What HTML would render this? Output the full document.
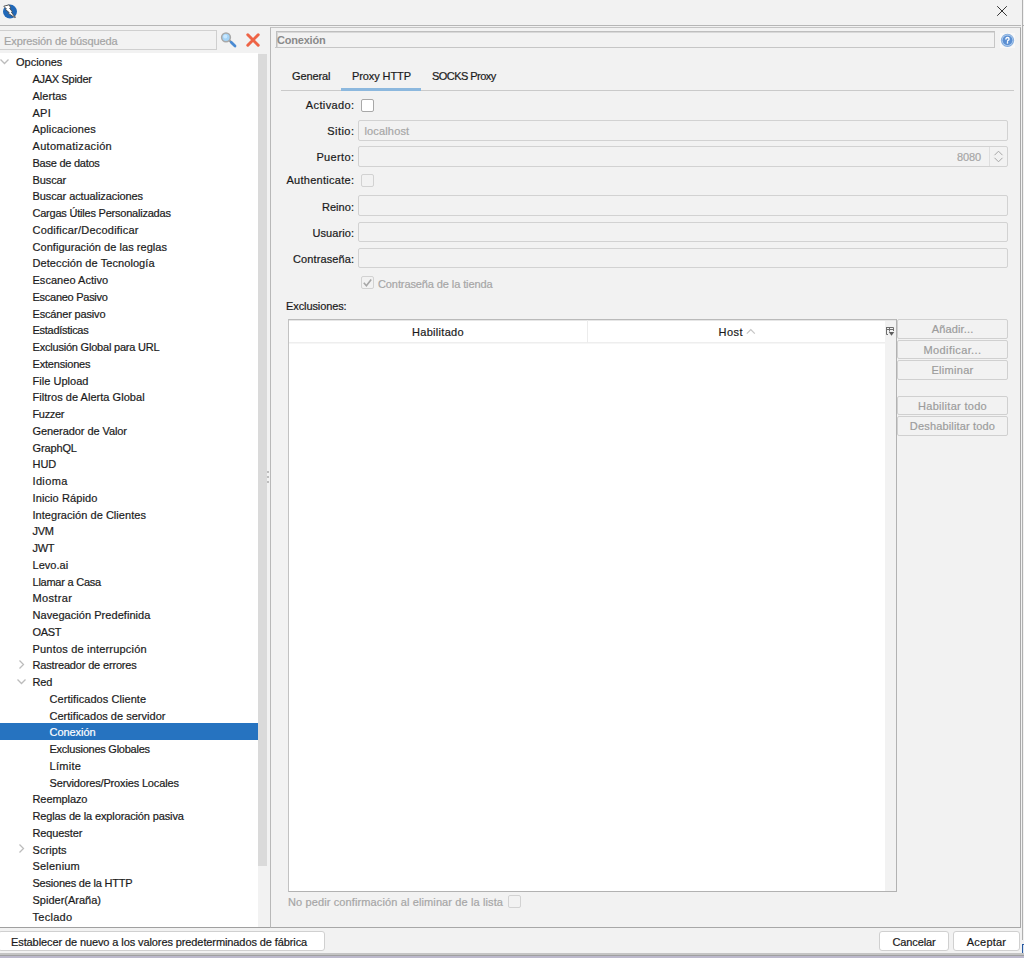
<!DOCTYPE html>
<html><head><meta charset="utf-8">
<style>
*{box-sizing:border-box;margin:0;padding:0}
html,body{width:1024px;height:958px;overflow:hidden;background:#f2f2f2;font-family:"Liberation Sans",sans-serif;font-size:11px;color:#1a1a1a;letter-spacing:-0.1px;-webkit-text-stroke:0.2px currentColor}

.a{position:absolute}
.t{position:absolute;white-space:pre;line-height:13px}
.hl{position:absolute;height:1px;background:#a0a0a0}
.vl{position:absolute;width:1px;background:#a0a0a0}
.fld{position:absolute;border:1px solid #d2d2d2;background:#f2f2f2;border-radius:2px}
.cb{position:absolute;width:13px;height:13px;border:1px solid #a8a8a8;background:#fff;border-radius:2px}
.cbd{border-color:#d2d2d2;background:#f2f2f2}
.btn{position:absolute;border:1px solid #d0d0d0;background:#f2f2f2;border-radius:2px;color:#9c9c9c;text-align:center;line-height:17px;white-space:pre;padding-top:1px}
.wb{background:#fff;color:#1a1a1a;border-color:#d0d0d0;border-radius:3px;padding-top:2px}
.lbl{position:absolute;white-space:pre;text-align:right;width:100px;line-height:13px}
</style></head><body>
<!-- title bar -->
<svg class="a" style="left:2px;top:3px" width="17" height="17" viewBox="0 0 17 17">
<circle cx="8" cy="8.6" r="7" fill="#2068b8"/>
<path d="M1.8 3.2 L7.2 1.8 L8.6 4.6 L7.6 5.2 L10.2 8.6 L9.4 9.2 L12.6 13.6 L13.6 14.2 L12.8 14.6 L6.4 10.4 L7.2 9.6 L3.6 6.6 L4.4 6 Z" fill="#fff" stroke="#4a4a4a" stroke-width="0.9" stroke-linejoin="round"/>
</svg>
<svg class="a" style="left:996px;top:5px" width="12" height="12" viewBox="0 0 12 12"><path d="M1.2 1.2 L10.8 10.8 M10.8 1.2 L1.2 10.8" stroke="#2a2a2a" stroke-width="0.95"/></svg>
<div class="hl" style="left:0;top:25px;width:1021px;background:#b6b6b6"></div>
<div class="vl" style="left:1022px;top:0;height:940px;background:#b0b0b0"></div>
<div class="a" style="left:1022px;top:944px;width:2px;height:9px;border-left:1px solid #2a5aa0;border-top:1px solid #2a5aa0;background:#d8e4f4"></div>

<!-- left panel -->
<div class="fld" style="left:-1px;top:30px;width:218px;height:20px;border-color:#cfcfcf;border-radius:0"></div>
<div class="t" style="left:4px;top:35px;color:#a4a4a4">Expresión de búsqueda</div>
<svg class="a" style="left:220px;top:31px" width="18" height="18" viewBox="0 0 18 18">
<path d="M9 9 L10.6 10.6" stroke="#8a8a8a" stroke-width="2"/>
<path d="M11.2 11.2 L15 14.9" stroke="#4a8ad2" stroke-width="2.8" stroke-linecap="round"/>
<circle cx="6" cy="6.3" r="4.4" fill="#a4d4f8" stroke="#a8a8a8" stroke-width="1.5"/>
<circle cx="5.3" cy="5.6" r="2" fill="#c8e8ff"/>
</svg>
<svg class="a" style="left:245px;top:32px" width="16" height="16" viewBox="0 0 16 16">
<path d="M2.8 2.8 L13.2 13.2 M13.2 2.8 L2.8 13.2" stroke="#ee6446" stroke-width="3" stroke-linecap="round"/>
</svg>
<div class="a" style="left:0;top:53px;width:258px;height:874px;background:#fff"></div>
<div class="a" style="left:258px;top:53px;width:9px;height:874px;background:#f2f2f2"></div>
<div class="a" style="left:258px;top:54px;width:9px;height:812px;background:#dadada"></div>
<div class="a" style="left:0;top:723px;width:258px;height:17px;background:#2673c0"></div>
<div class="t" style="left:16px;top:56.40px;color:#1b1b1b;letter-spacing:-0.014px">Opciones</div>
<svg class="a" style="left:0px;top:59px" width="10" height="6" viewBox="0 0 10 6"><path d="M0.5 0.5 L4.5 4.5 L8.5 0.5" fill="none" stroke="#bcbcbc" stroke-width="1.25"/></svg>
<div class="t" style="left:32.5px;top:73.15px;color:#1b1b1b;letter-spacing:-0.3px">AJAX Spider</div>
<div class="t" style="left:32.5px;top:89.90px;color:#1b1b1b;letter-spacing:0.017px">Alertas</div>
<div class="t" style="left:32.5px;top:106.65px;color:#1b1b1b;letter-spacing:0.25px">API</div>
<div class="t" style="left:32.5px;top:123.40px;color:#1b1b1b;letter-spacing:0.145px">Aplicaciones</div>
<div class="t" style="left:32.5px;top:140.15px;color:#1b1b1b;letter-spacing:0.308px">Automatización</div>
<div class="t" style="left:32.5px;top:156.90px;color:#1b1b1b;letter-spacing:-0.25px">Base de datos</div>
<div class="t" style="left:32.5px;top:173.65px;color:#1b1b1b;letter-spacing:-0.1px">Buscar</div>
<div class="t" style="left:32.5px;top:190.40px;color:#1b1b1b;letter-spacing:-0.09px">Buscar actualizaciones</div>
<div class="t" style="left:32.5px;top:207.15px;color:#1b1b1b;letter-spacing:-0.219px">Cargas Útiles Personalizadas</div>
<div class="t" style="left:32.5px;top:223.90px;color:#1b1b1b;letter-spacing:0.225px">Codificar/Decodificar</div>
<div class="t" style="left:32.5px;top:240.65px;color:#1b1b1b;letter-spacing:0.046px">Configuración de las reglas</div>
<div class="t" style="left:32.5px;top:257.40px;color:#1b1b1b;letter-spacing:0.082px">Detección de Tecnología</div>
<div class="t" style="left:32.5px;top:274.15px;color:#1b1b1b;letter-spacing:0.038px">Escaneo Activo</div>
<div class="t" style="left:32.5px;top:290.90px;color:#1b1b1b;letter-spacing:-0.269px">Escaneo Pasivo</div>
<div class="t" style="left:32.5px;top:307.65px;color:#1b1b1b;letter-spacing:-0.169px">Escáner pasivo</div>
<div class="t" style="left:32.5px;top:324.40px;color:#1b1b1b;letter-spacing:-0.282px">Estadísticas</div>
<div class="t" style="left:32.5px;top:341.15px;color:#1b1b1b;letter-spacing:-0.204px">Exclusión Global para URL</div>
<div class="t" style="left:32.5px;top:357.90px;color:#1b1b1b;letter-spacing:-0.19px">Extensiones</div>
<div class="t" style="left:32.5px;top:374.65px;color:#1b1b1b;letter-spacing:0.03px">File Upload</div>
<div class="t" style="left:32.5px;top:391.40px;color:#1b1b1b;letter-spacing:0.035px">Filtros de Alerta Global</div>
<div class="t" style="left:32.5px;top:408.15px;color:#1b1b1b;letter-spacing:-0.35px">Fuzzer</div>
<div class="t" style="left:32.5px;top:424.90px;color:#1b1b1b;letter-spacing:-0.076px">Generador de Valor</div>
<div class="t" style="left:32.5px;top:441.65px;color:#1b1b1b;letter-spacing:-0.133px">GraphQL</div>
<div class="t" style="left:32.5px;top:458.40px;color:#1b1b1b;letter-spacing:-0.05px">HUD</div>
<div class="t" style="left:32.5px;top:475.15px;color:#1b1b1b;letter-spacing:0.35px">Idioma</div>
<div class="t" style="left:32.5px;top:491.90px;color:#1b1b1b;letter-spacing:0.108px">Inicio Rápido</div>
<div class="t" style="left:32.5px;top:508.65px;color:#1b1b1b;letter-spacing:0.041px">Integración de Clientes</div>
<div class="t" style="left:32.5px;top:525.40px;color:#1b1b1b;letter-spacing:-0.25px">JVM</div>
<div class="t" style="left:32.5px;top:542.15px;color:#1b1b1b;letter-spacing:-0.35px">JWT</div>
<div class="t" style="left:32.5px;top:558.90px;color:#1b1b1b;letter-spacing:0.033px">Levo.ai</div>
<div class="t" style="left:32.5px;top:575.65px;color:#1b1b1b;letter-spacing:-0.242px">Llamar a Casa</div>
<div class="t" style="left:32.5px;top:592.40px;color:#1b1b1b;letter-spacing:0.35px">Mostrar</div>
<div class="t" style="left:32.5px;top:609.15px;color:#1b1b1b;letter-spacing:0.052px">Navegación Predefinida</div>
<div class="t" style="left:32.5px;top:625.90px;color:#1b1b1b;letter-spacing:-0.35px">OAST</div>
<div class="t" style="left:32.5px;top:642.65px;color:#1b1b1b;letter-spacing:0.19px">Puntos de interrupción</div>
<div class="t" style="left:32.5px;top:659.40px;color:#1b1b1b;letter-spacing:-0.165px">Rastreador de errores</div>
<svg class="a" style="left:18.5px;top:660px" width="6" height="10" viewBox="0 0 6 10"><path d="M0.5 0.5 L4.5 4.5 L0.5 8.5" fill="none" stroke="#bcbcbc" stroke-width="1.25"/></svg>
<div class="t" style="left:32.5px;top:676.15px;color:#1b1b1b;letter-spacing:-0.15px">Red</div>
<svg class="a" style="left:16.5px;top:679px" width="10" height="6" viewBox="0 0 10 6"><path d="M0.5 0.5 L4.5 4.5 L8.5 0.5" fill="none" stroke="#bcbcbc" stroke-width="1.25"/></svg>
<div class="t" style="left:49.5px;top:692.90px;color:#1b1b1b;letter-spacing:0.063px">Certificados Cliente</div>
<div class="t" style="left:49.5px;top:709.65px;color:#1b1b1b;letter-spacing:0.017px">Certificados de servidor</div>
<div class="t" style="left:49.5px;top:726.40px;color:#ffffff;letter-spacing:-0.057px">Conexión</div>
<div class="t" style="left:49.5px;top:743.15px;color:#1b1b1b;letter-spacing:-0.242px">Exclusiones Globales</div>
<div class="t" style="left:49.5px;top:759.90px;color:#1b1b1b;letter-spacing:0.28px">Límite</div>
<div class="t" style="left:49.5px;top:776.65px;color:#1b1b1b;letter-spacing:-0.156px">Servidores/Proxies Locales</div>
<div class="t" style="left:32.5px;top:793.40px;color:#1b1b1b;letter-spacing:-0.088px">Reemplazo</div>
<div class="t" style="left:32.5px;top:810.15px;color:#1b1b1b;letter-spacing:-0.13px">Reglas de la exploración pasiva</div>
<div class="t" style="left:32.5px;top:826.90px;color:#1b1b1b;letter-spacing:-0.112px">Requester</div>
<div class="t" style="left:32.5px;top:843.65px;color:#1b1b1b;letter-spacing:0.067px">Scripts</div>
<svg class="a" style="left:18.5px;top:844px" width="6" height="10" viewBox="0 0 6 10"><path d="M0.5 0.5 L4.5 4.5 L0.5 8.5" fill="none" stroke="#bcbcbc" stroke-width="1.25"/></svg>
<div class="t" style="left:32.5px;top:860.40px;color:#1b1b1b;letter-spacing:0.2px">Selenium</div>
<div class="t" style="left:32.5px;top:877.15px;color:#1b1b1b;letter-spacing:-0.217px">Sesiones de la HTTP</div>
<div class="t" style="left:32.5px;top:893.90px;color:#1b1b1b;letter-spacing:0.0px">Spider(Araña)</div>
<div class="t" style="left:32.5px;top:910.65px;color:#1b1b1b;letter-spacing:0.267px">Teclado</div>
<div class="a" style="left:267px;top:471px;width:2px;height:2px;background:#acacac;border-radius:1px"></div>
<div class="a" style="left:267px;top:476px;width:2px;height:2px;background:#acacac;border-radius:1px"></div>
<div class="a" style="left:267px;top:481px;width:2px;height:2px;background:#acacac;border-radius:1px"></div>
<div class="hl" style="left:0;top:927px;width:271px;background:#a0a0a0"></div>

<!-- right panel -->
<div class="a" style="left:270px;top:27px;width:751px;height:901px;border:1px solid #b8b8b8;border-top-color:#c4c4c4;border-bottom-color:#a8a8a8;border-right-color:#a8a8a8;background:#f2f2f2"></div>
<div class="hl" style="left:1022px;top:25px;width:2px;background:#b0b0b0"></div>
<div class="a" style="left:276px;top:31px;width:719px;height:17px;border-top:1px solid #bebebe;border-left:1px solid #c0c0c0;border-bottom:1px solid #c6c6c6;border-right:1px solid #c6c6c6;background:#f2f2f2;box-shadow:inset 1px 1px 0 #d8d8d8"></div>
<div class="hl" style="left:275px;top:47px;width:720px;background:#c6c6c6"></div>
<div class="t" style="left:277px;top:34px;color:#8a8a8a;font-weight:bold;letter-spacing:-0.2px;-webkit-text-stroke:0">Conexión</div>
<svg class="a" style="left:1000px;top:33px" width="15" height="15" viewBox="0 0 15 15">
<rect width="15" height="15" fill="#f8f8f8"/>
<circle cx="7.5" cy="7.3" r="6.6" fill="#7fa9dc"/>
<circle cx="7.5" cy="7.3" r="5.7" fill="#b4d0f0"/>
<circle cx="7.5" cy="7.3" r="4.9" fill="#5b8fd2"/>
<path d="M5.9 6 Q5.9 4.5 7.5 4.5 Q9.1 4.5 9.1 5.9 Q9.1 6.8 8.1 7.3 Q7.5 7.6 7.5 8.3" fill="none" stroke="#fff" stroke-width="1.3" stroke-linecap="round"/>
<circle cx="7.5" cy="9.9" r="0.8" fill="#fff"/>
</svg>

<!-- tabs -->
<div class="hl" style="left:281px;top:90px;width:733px;background:#cacaca"></div>
<div class="a" style="left:341px;top:88px;width:80px;height:3px;background:#8cb8de"></div>
<div class="t" style="left:292px;top:70px">General</div>
<div class="t" style="left:352px;top:70px">Proxy HTTP</div>
<div class="t" style="left:432px;top:70px;letter-spacing:-0.55px">SOCKS Proxy</div>

<!-- form -->
<div class="lbl" style="left:254.36px;top:99px;letter-spacing:0.36px">Activado:</div>
<div class="cb" style="left:361px;top:99px"></div>
<div class="lbl" style="left:254.44px;top:125px;letter-spacing:0.44px">Sitio:</div>
<div class="fld" style="left:358px;top:120px;width:650px;height:21px"></div>
<div class="t" style="left:364.5px;top:125px;color:#a6a6a6;letter-spacing:0.15px">localhost</div>
<div class="lbl" style="left:254.35px;top:151px;letter-spacing:0.35px">Puerto:</div>
<div class="fld" style="left:358px;top:146px;width:650px;height:21px"></div>
<div class="vl" style="left:989px;top:147px;height:19px;background:#dedede"></div>
<div class="t" style="left:957px;top:151px;color:#a6a6a6">8080</div>
<svg class="a" style="left:993px;top:150px" width="12" height="13" viewBox="0 0 12 13"><path d="M1.5 5.2 L5.5 1.2 L9.5 5.2 M1.5 7.8 L5.5 11.8 L9.5 7.8" fill="none" stroke="#a6a6a6" stroke-width="1"/></svg>
<div class="lbl" style="left:254.28px;top:174px;letter-spacing:0.28px">Authenticate:</div>
<div class="cb cbd" style="left:361px;top:174px"></div>
<div class="lbl" style="left:254.06px;top:201px;letter-spacing:0.06px">Reino:</div>
<div class="fld" style="left:358px;top:195px;width:650px;height:21px"></div>
<div class="lbl" style="left:254.09px;top:227px;letter-spacing:0.09px">Usuario:</div>
<div class="fld" style="left:358px;top:222px;width:650px;height:20px"></div>
<div class="lbl" style="left:254.10px;top:253px;letter-spacing:0.1px">Contraseña:</div>
<div class="fld" style="left:358px;top:248px;width:650px;height:20px"></div>
<div class="cb cbd" style="left:361px;top:276px"></div>
<svg class="a" style="left:361px;top:276px" width="13" height="13" viewBox="0 0 13 13"><path d="M2.8 6.8 L5.4 9.8 L10.2 3.4" fill="none" stroke="#a6a6a6" stroke-width="1.6"/></svg>
<div class="t" style="left:378px;top:278px;color:#a6a6a6">Contraseña de la tienda</div>
<div class="t" style="left:286px;top:300px">Exclusiones:</div>

<!-- table -->
<div class="a" style="left:288px;top:319px;width:609px;height:573px;border:1px solid #b2b2b2;border-top-color:#bababa;border-left-color:#c2c2c2;background:#fff"></div>
<div class="a" style="left:885px;top:320px;width:11px;height:571px;background:#f2f2f2"></div>
<div class="hl" style="left:289px;top:320px;width:607px;background:#e6e6e6"></div><div class="hl" style="left:289px;top:342px;width:596px;background:#eeeeee"></div><div class="hl" style="left:289px;top:343px;width:596px;background:#f6f6f6"></div>
<div class="vl" style="left:587px;top:320px;height:23px;background:#ececec"></div>
<div class="t" style="left:412px;top:326px;letter-spacing:0.3px">Habilitado</div>
<div class="t" style="left:718.5px;top:326px;letter-spacing:0.5px">Host</div>
<svg class="a" style="left:745px;top:328px" width="11" height="7" viewBox="0 0 11 7"><path d="M1.8 5.6 L5.8 1.6 L9.8 5.6" fill="none" stroke="#c4c4c4" stroke-width="1.2"/></svg>
<svg class="a" style="left:885px;top:326px" width="11" height="11" viewBox="0 0 11 11">
<path d="M1.5 1.5 H8.5 V5 M1.5 1 V8.5 H3 M4.5 1.5 V5.5 M2 3.5 H8.5" fill="none" stroke="#6e6e6e" stroke-width="1"/>
<path d="M3.8 6 H9.2 L6.5 9.8 Z" fill="#5e5e5e"/>
</svg>

<!-- buttons -->
<div class="btn" style="left:897px;top:319px;width:111px;height:20px;letter-spacing:0.15px">Añadir...</div>
<div class="btn" style="left:897px;top:340px;width:111px;height:19px;letter-spacing:0.4px">Modificar...</div>
<div class="btn" style="left:897px;top:360px;width:111px;height:20px;letter-spacing:0.3px">Eliminar</div>
<div class="btn" style="left:897px;top:396px;width:111px;height:19px;letter-spacing:0.3px">Habilitar todo</div>
<div class="btn" style="left:897px;top:416px;width:111px;height:20px;letter-spacing:0.16px">Deshabilitar todo</div>

<div class="t" style="left:288px;top:896px;color:#a6a6a6;letter-spacing:0.12px">No pedir confirmación al eliminar de la lista</div>
<div class="cb cbd" style="left:508px;top:895px"></div>

<!-- bottom -->
<div class="btn wb" style="left:-2px;top:931px;width:327px;height:20px;border-radius:3px;text-align:left;padding-left:12px">Establecer de nuevo a los valores predeterminados de fábrica</div>
<div class="btn wb" style="left:879px;top:931px;width:70px;height:20px">Cancelar</div>
<div class="btn wb" style="left:953px;top:931px;width:67px;height:20px;letter-spacing:0.23px">Aceptar</div>
<div class="a" style="left:0;top:953px;width:1024px;height:2px;background:#c4c4c4"></div>
<div class="a" style="left:0;top:955px;width:1024px;height:1px;background:#a0a0a0"></div>
<div class="a" style="left:0;top:956px;width:1024px;height:2px;background:#bcb9cc"></div>
</body></html>
